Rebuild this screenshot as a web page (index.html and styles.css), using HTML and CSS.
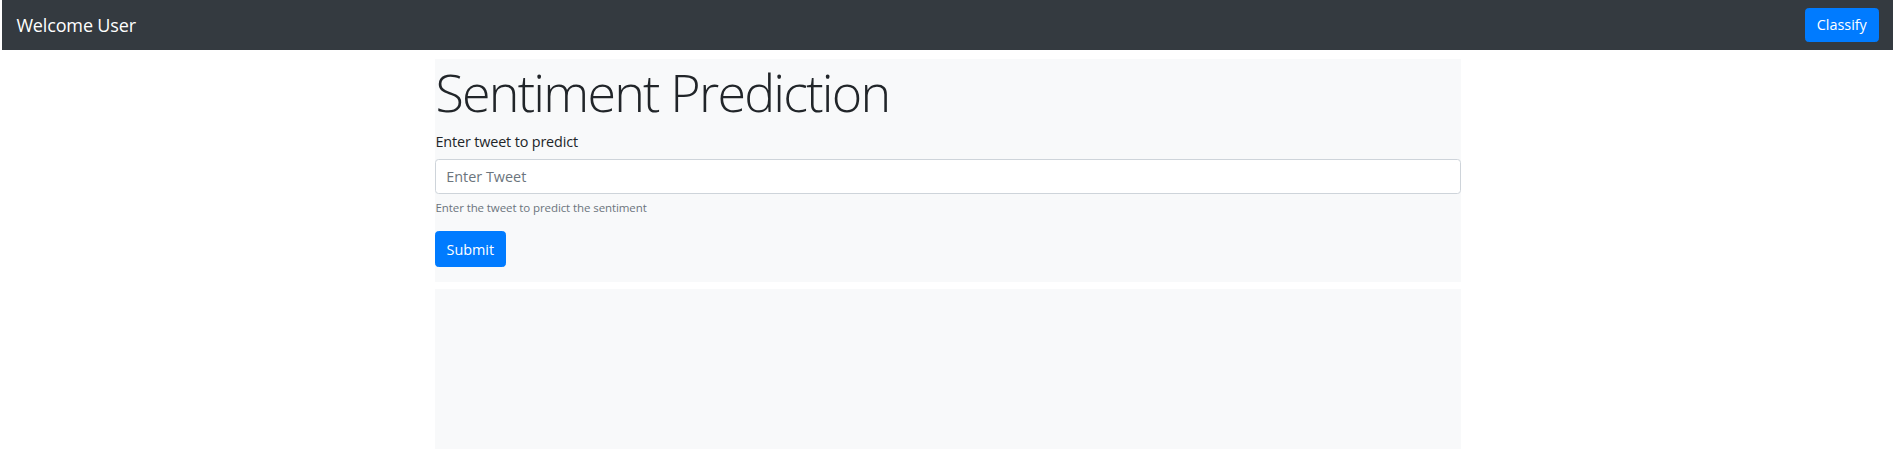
FILE: index.html
```html
<!DOCTYPE html>
<html lang="en">
<head>
<meta charset="utf-8">
<title>Sentiment Prediction</title>
<link rel="stylesheet" href="styles.css">
</head>
<body>
<div class="page">
  <nav class="navbar">
    <a class="brand" href="#">Welcome User</a>
    <button class="btn btn-primary" type="button">Classify</button>
  </nav>
  <main class="container">
    <section class="panel">
      <h1 class="display">Sentiment Prediction</h1>
      <form class="form">
        <div class="form-group">
          <label class="label" for="tweet">Enter tweet to predict</label>
          <input class="input" id="tweet" type="text" placeholder="Enter Tweet">
          <small class="help">Enter the tweet to predict the sentiment</small>
        </div>
        <button class="btn btn-primary btn-submit" type="submit">Submit</button>
      </form>
    </section>
    <section class="panel result"></section>
  </main>
</div>
</body>
</html>
```
FILE: styles.css
```css
* { box-sizing: border-box; }
html, body { margin: 0; padding: 0; background: #fff; }
body {
  font-family: "Open Sans", "Noto Sans", sans-serif;
  font-size: 14.4px;
  line-height: 1.5;
  color: #212529;
}
.page { margin-left: 2px; }

.navbar {
  display: flex;
  align-items: center;
  justify-content: space-between;
  height: 50.4px;
  padding: 0 14.4px;
  background: #343a40;
}
.brand {
  font-size: 18px;
  line-height: 27px;
  color: #fff;
  text-decoration: none;
  letter-spacing: -0.15px;
}

.btn {
  display: inline-block;
  font-family: inherit;
  font-size: 14.4px;
  line-height: 21.6px;
  padding: 5.4px 10.8px;
  border: 1px solid transparent;
  border-radius: 3.6px;
  cursor: pointer;
}
.btn-primary {
  background: #007bff;
  border-color: #007bff;
  color: #fff;
}
.btn-submit { padding: 6.2px 11px; }

.container {
  width: 1026px;
  margin: 8.6px auto 0;
}
.panel {
  background: #f8f9fa;
  padding: 0 0 15px;
  margin-bottom: 7px;
}
.display {
  margin: 0 0 7.2px;
  padding: 2.2px 0 0 1px;
  font-size: 52px;
  font-weight: 300;
  line-height: 1.2;
  letter-spacing: -1.8px;
}
.form { margin: 0; }
.form-group { margin-bottom: 14.7px; }
.label {
  display: inline-block;
  margin-bottom: 7px;
  letter-spacing: -0.15px;
  padding-left: 1px;
}
.input {
  display: block;
  width: 100%;
  height: 35px;
  padding: 5.4px 10.8px;
  font-family: inherit;
  font-size: 14.4px;
  line-height: 21.6px;
  color: #495057;
  background: #fff;
  border: 1px solid #ced4da;
  border-radius: 3.6px;
}
.input::placeholder { color: #6c757d; opacity: 1; }
.help {
  display: block;
  margin-top: 5px;
  font-size: 11.52px;
  line-height: 17.28px;
  color: #6c757d;
  letter-spacing: -0.1px;
  padding-left: 1px;
}
.result { height: 160px; margin-bottom: 0; }
```
